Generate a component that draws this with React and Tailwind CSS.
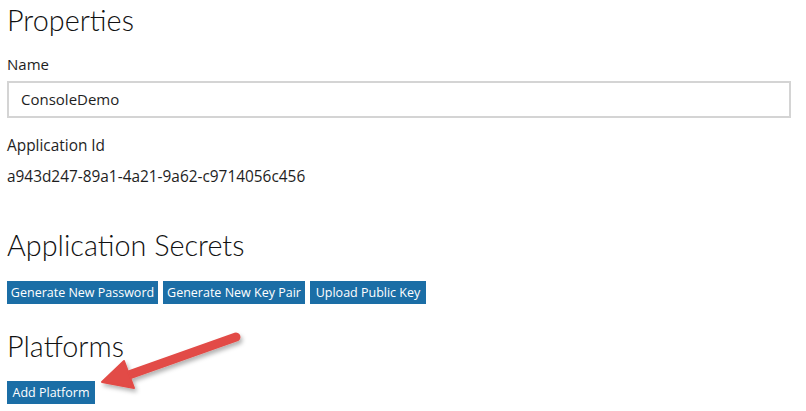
import React from "react";

const btn =
  "h-[23px] bg-[#1b6ea6] text-white text-[12.5px] leading-[23px] text-center whitespace-nowrap";

const heading = "text-[28.8px] leading-[36px] font-light text-[#111] font-['Lato',sans-serif]";

const Arrow = () => (
  <svg
    className="absolute left-0 top-0 pointer-events-none"
    width="806"
    height="411"
    viewBox="0 0 806 411"
  >
    <defs>
      <filter id="sh" x="-20%" y="-20%" width="140%" height="140%">
        <feDropShadow dx="2" dy="3" stdDeviation="2" floodColor="#000" floodOpacity="0.3" />
      </filter>
    </defs>
    <g filter="url(#sh)" fill="#e24b46" stroke="#e24b46">
      <line x1="236" y1="337" x2="126" y2="376" strokeWidth="9" strokeLinecap="round" />
      <polygon points="102,382 124,361 134,388" strokeWidth="2" strokeLinejoin="round" />
    </g>
  </svg>
);

export default function App() {
  return (
    <div
      className="relative w-[806px] h-[411px] overflow-hidden bg-white pl-[7px] text-[#1e1e1e]"
      style={{ fontFamily: "'Open Sans', 'Noto Sans', sans-serif" }}
    >
      <h1 className={`pt-[2px] ${heading}`}>Properties</h1>
      <div className="mt-[16px] text-[15px] leading-[20px]">Name</div>
      <div className="mt-[7px] w-[784px] h-[37px] border-2 border-[#d4d4d4] pl-[12px] text-[15px] leading-[33px]">
        ConsoleDemo
      </div>
      <div className="mt-[18px] text-[15.4px] leading-[20px]">Application Id</div>
      <div className="mt-[11px] text-[15.4px] leading-[20px]">a943d247-89a1-4a21-9a62-c9714056c456</div>
      <h2 className={`mt-[40px] ${heading}`}>Application Secrets</h2>
      <div className="mt-[18px] flex gap-[5px]">
        <button className={`${btn} w-[151px]`}>Generate New Password</button>
        <button className={`${btn} w-[142px]`}>Generate New Key Pair</button>
        <button className={`${btn} w-[116px]`}>Upload Public Key</button>
      </div>
      <h2 className={`mt-[24px] ${heading}`}>Platforms</h2>
      <div className="mt-[17px] flex">
        <button className={`${btn} w-[88px]`}>Add Platform</button>
      </div>
      <Arrow />
    </div>
  );
}
